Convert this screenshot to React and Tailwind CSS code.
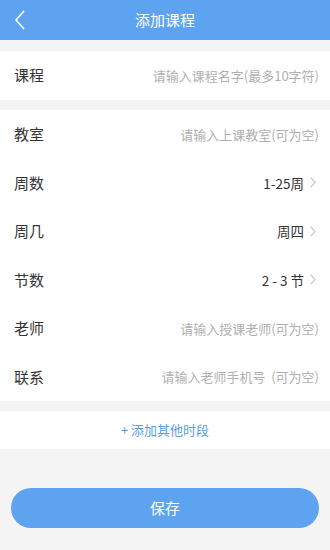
import React from 'react'

const rows = [
  { label: '教室', placeholder: '请输入上课教室(可为空)' },
  { label: '周数', value: '1-25周' },
  { label: '周几', value: '周四' },
  { label: '节数', value: '2 - 3 节' },
  { label: '老师', placeholder: '请输入授课老师(可为空)' },
  { label: '联系', placeholder: '请输入老师手机号\u00a0\u00a0(可为空)' },
]

function Chevron() {
  return (
    <svg width="6" height="11" viewBox="0 0 6 11" className="ml-[6px]">
      <path d="M1 1l4 4.5-4 4.5" fill="none" stroke="#a8a8a8" strokeWidth="1" />
    </svg>
  )
}

function Row({ label, placeholder, value, h = 'h-[48.5px]' }) {
  return (
    <div className={`flex items-center justify-between px-[14px] ${h}`}>
      <span className="text-[15px] text-[#333]">{label}</span>
      {placeholder ? (
        <span className="text-[13px] text-[#b0b0b0] mr-[-3px]">{placeholder}</span>
      ) : (
        <span className="flex items-center text-[13.5px] text-[#333]">
          {value}
          <Chevron />
        </span>
      )}
    </div>
  )
}

export default function App() {
  return (
    <div
      className="w-[330px] h-[550px] bg-[#f4f4f4] flex flex-col"
      style={{ fontFamily: '"Noto Sans CJK SC", "Noto Sans", sans-serif' }}
    >
      <div className="h-[40px] bg-[#5da3ef] flex items-center relative shrink-0">
        <svg width="12" height="20" viewBox="0 0 12 20" className="absolute left-[14px] top-[10px]">
          <path d="M10 1L2 10l8 9" fill="none" stroke="#fff" strokeWidth="1.6" />
        </svg>
        <span className="w-full text-center text-white text-[15px]">添加课程</span>
      </div>

      <div className="bg-white mt-[11px]">
        <Row label="课程" placeholder="请输入课程名字(最多10字符)" h="h-[49px]" />
      </div>

      <div className="bg-white mt-[10px]">
        {rows.map(r => (
          <Row key={r.label} {...r} />
        ))}
      </div>

      <div className="bg-white mt-[10px] h-[38px] flex items-center justify-center text-[13px] text-[#5b9de0]">
        + 添加其他时段
      </div>

      <div className="px-[11px] mt-[39px]">
        <button className="w-full h-[40px] rounded-full bg-[#5da3ef] text-white text-[15px]">保存</button>
      </div>
    </div>
  )
}
